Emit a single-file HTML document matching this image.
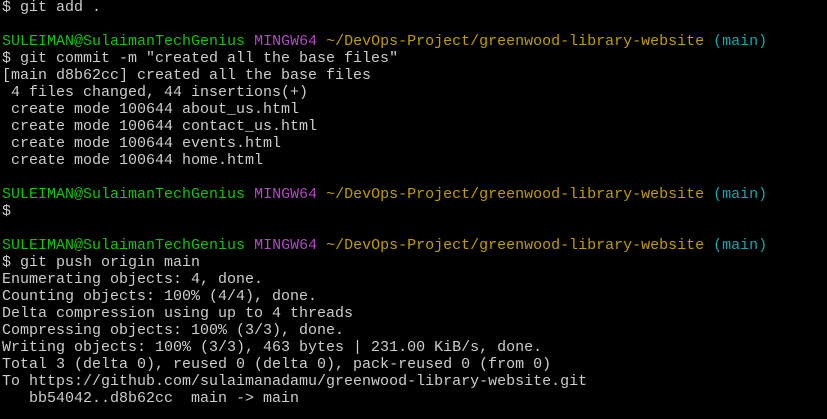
<!DOCTYPE html>
<html><head><meta charset="utf-8"><style>
html,body{margin:0;padding:0;background:#000;width:827px;height:419px;overflow:hidden}
pre{position:absolute;left:2px;top:-1px;margin:0;font-family:"Liberation Mono","DejaVu Sans Mono",monospace;font-size:15px;line-height:17px;color:#cccccc;letter-spacing:0px}
.g{color:#13c30e}.m{color:#b148c6}.y{color:#c19c00}.c{color:#11a8b0}
</style></head><body><pre>$ git add .

<span class="g">SULEIMAN@SulaimanTechGenius</span> <span class="m">MINGW64</span> <span class="y">~/DevOps-Project/greenwood-library-website</span> <span class="c">(main)</span>
$ git commit -m "created all the base files"
[main d8b62cc] created all the base files
 4 files changed, 44 insertions(+)
 create mode 100644 about_us.html
 create mode 100644 contact_us.html
 create mode 100644 events.html
 create mode 100644 home.html

<span class="g">SULEIMAN@SulaimanTechGenius</span> <span class="m">MINGW64</span> <span class="y">~/DevOps-Project/greenwood-library-website</span> <span class="c">(main)</span>
$

<span class="g">SULEIMAN@SulaimanTechGenius</span> <span class="m">MINGW64</span> <span class="y">~/DevOps-Project/greenwood-library-website</span> <span class="c">(main)</span>
$ git push origin main
Enumerating objects: 4, done.
Counting objects: 100% (4/4), done.
Delta compression using up to 4 threads
Compressing objects: 100% (3/3), done.
Writing objects: 100% (3/3), 463 bytes | 231.00 KiB/s, done.
Total 3 (delta 0), reused 0 (delta 0), pack-reused 0 (from 0)
To https://github.com/sulaimanadamu/greenwood-library-website.git
   bb54042..d8b62cc  main -&gt; main
</pre></body></html>
